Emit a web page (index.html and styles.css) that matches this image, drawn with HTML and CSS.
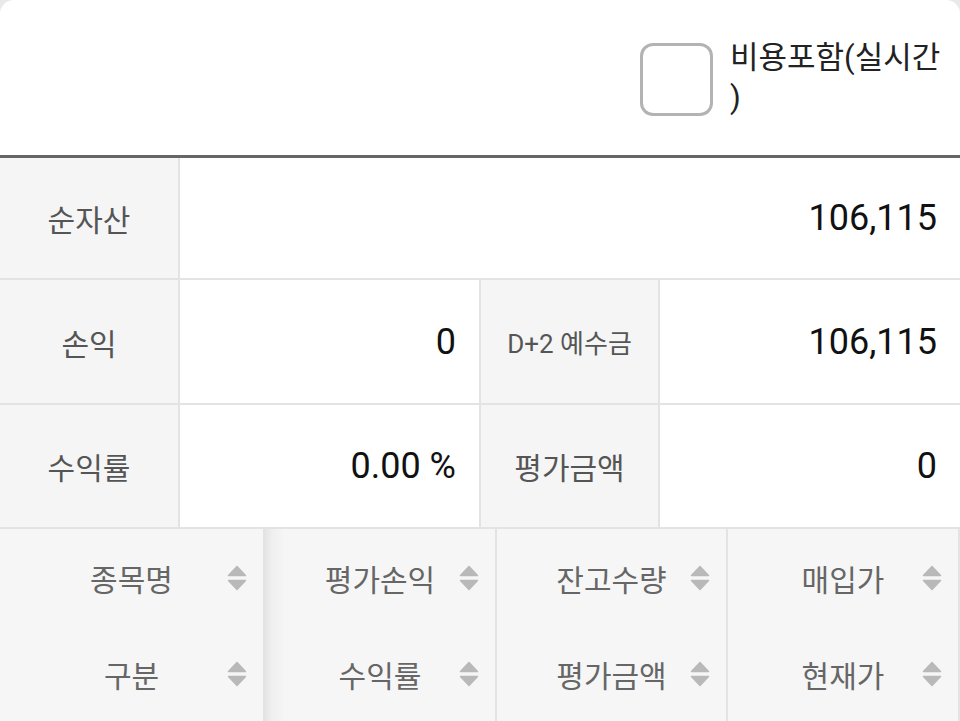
FILE: index.html
```html
<!DOCTYPE html>
<html lang="ko">
<head>
<meta charset="utf-8">
<title>잔고</title>
<link rel="stylesheet" href="styles.css">
</head>
<body>
<div class="card">
  <div class="topbar">
    <label class="check">
      <span class="box"></span>
      <span class="check-text">비용포함(실시간<br>)</span>
    </label>
  </div>

  <div class="summary">
    <div class="lbl">순자산</div>
    <div class="val span3">106,115</div>

    <div class="lbl">손익</div>
    <div class="val">0</div>
    <div class="lbl small">D+2 예수금</div>
    <div class="val">106,115</div>

    <div class="lbl">수익률</div>
    <div class="val">0.00 %</div>
    <div class="lbl">평가금액</div>
    <div class="val">0</div>
  </div>

  <div class="thead">
    <div class="th"><span class="tt">종목명</span><svg class="sort" viewBox="0 0 20 26"><path d="M1.5 10.5 L10 1.5 L18.5 10.5 Z"/><path d="M1.5 15.5 L18.5 15.5 L10 24.5 Z"/></svg></div>
    <div class="th shade"><span class="tt">평가손익</span><svg class="sort" viewBox="0 0 20 26"><path d="M1.5 10.5 L10 1.5 L18.5 10.5 Z"/><path d="M1.5 15.5 L18.5 15.5 L10 24.5 Z"/></svg></div>
    <div class="th"><span class="tt">잔고수량</span><svg class="sort" viewBox="0 0 20 26"><path d="M1.5 10.5 L10 1.5 L18.5 10.5 Z"/><path d="M1.5 15.5 L18.5 15.5 L10 24.5 Z"/></svg></div>
    <div class="th"><span class="tt">매입가</span><svg class="sort" viewBox="0 0 20 26"><path d="M1.5 10.5 L10 1.5 L18.5 10.5 Z"/><path d="M1.5 15.5 L18.5 15.5 L10 24.5 Z"/></svg></div>

    <div class="th"><span class="tt">구분</span><svg class="sort" viewBox="0 0 20 26"><path d="M1.5 10.5 L10 1.5 L18.5 10.5 Z"/><path d="M1.5 15.5 L18.5 15.5 L10 24.5 Z"/></svg></div>
    <div class="th shade"><span class="tt">수익률</span><svg class="sort" viewBox="0 0 20 26"><path d="M1.5 10.5 L10 1.5 L18.5 10.5 Z"/><path d="M1.5 15.5 L18.5 15.5 L10 24.5 Z"/></svg></div>
    <div class="th"><span class="tt">평가금액</span><svg class="sort" viewBox="0 0 20 26"><path d="M1.5 10.5 L10 1.5 L18.5 10.5 Z"/><path d="M1.5 15.5 L18.5 15.5 L10 24.5 Z"/></svg></div>
    <div class="th"><span class="tt">현재가</span><svg class="sort" viewBox="0 0 20 26"><path d="M1.5 10.5 L10 1.5 L18.5 10.5 Z"/><path d="M1.5 15.5 L18.5 15.5 L10 24.5 Z"/></svg></div>
  </div>
</div>
</body>
</html>
```

FILE: styles.css
```css
html, body {
  margin: 0;
  padding: 0;
  height: 100%;
  overflow: hidden;
  background: #e9e9e9;
}

body {
  font-family: Roboto, "Noto Sans CJK KR", sans-serif;
}

.card {
  background: #ffffff;
  border-radius: 14px 14px 0 0;
  overflow: hidden;
  min-height: 721px;
}

.topbar {
  height: 155px;
  display: flex;
  align-items: center;
  justify-content: flex-end;
  padding-right: 6px;
  box-sizing: border-box;
}

.check {
  display: flex;
  align-items: center;
  gap: 17px;
}

.box {
  width: 67px;
  height: 67px;
  border: 3px solid #b3b3b3;
  border-radius: 13px;
  background: #fff;
  margin-top: 4px;
}

.check-text {
  width: 224px;
  font-size: 31px;
  line-height: 40px;
  color: #222;
}

.summary {
  display: grid;
  grid-template-columns: 178px 299px 177px 1fr;
  grid-template-rows: 120px 123px 122px;
  gap: 2px;
  padding-bottom: 2px;
  background: #e3e3e3;
  border-top: 3px solid #666666;
}

.lbl {
  background: #f5f5f5;
  color: #555555;
  font-size: 30px;
  display: flex;
  align-items: center;
  justify-content: center;
}

.lbl.small {
  font-size: 26px;
}

.val {
  background: #ffffff;
  color: #111111;
  font-size: 36px;
  display: flex;
  align-items: center;
  justify-content: flex-end;
  padding-right: 23px;
}

.span3 {
  grid-column: span 3;
}

.thead {
  display: grid;
  grid-template-columns: 263px 230px 229px 230px;
  grid-template-rows: 97px 96px;
  column-gap: 2px;
  background: #e3e3e3;
  padding-right: 2px;
}

.th {
  background: #f6f6f6;
  display: grid;
  grid-template-columns: 1fr auto 1fr;
  align-items: center;
  color: #666666;
  font-size: 30px;
  padding: 0 16px;
}

.th.shade {
  background: linear-gradient(to right, #e4e4e4 0px, #efefef 7px, #f6f6f6 20px);
}

.tt {
  grid-column: 2;
  white-space: nowrap;
}

.sort {
  grid-column: 3;
  justify-self: end;
  width: 20px;
  height: 26px;
  fill: #b9b9b9;
  stroke: #b9b9b9;
  stroke-width: 1.5;
  stroke-linejoin: round;
}
```
